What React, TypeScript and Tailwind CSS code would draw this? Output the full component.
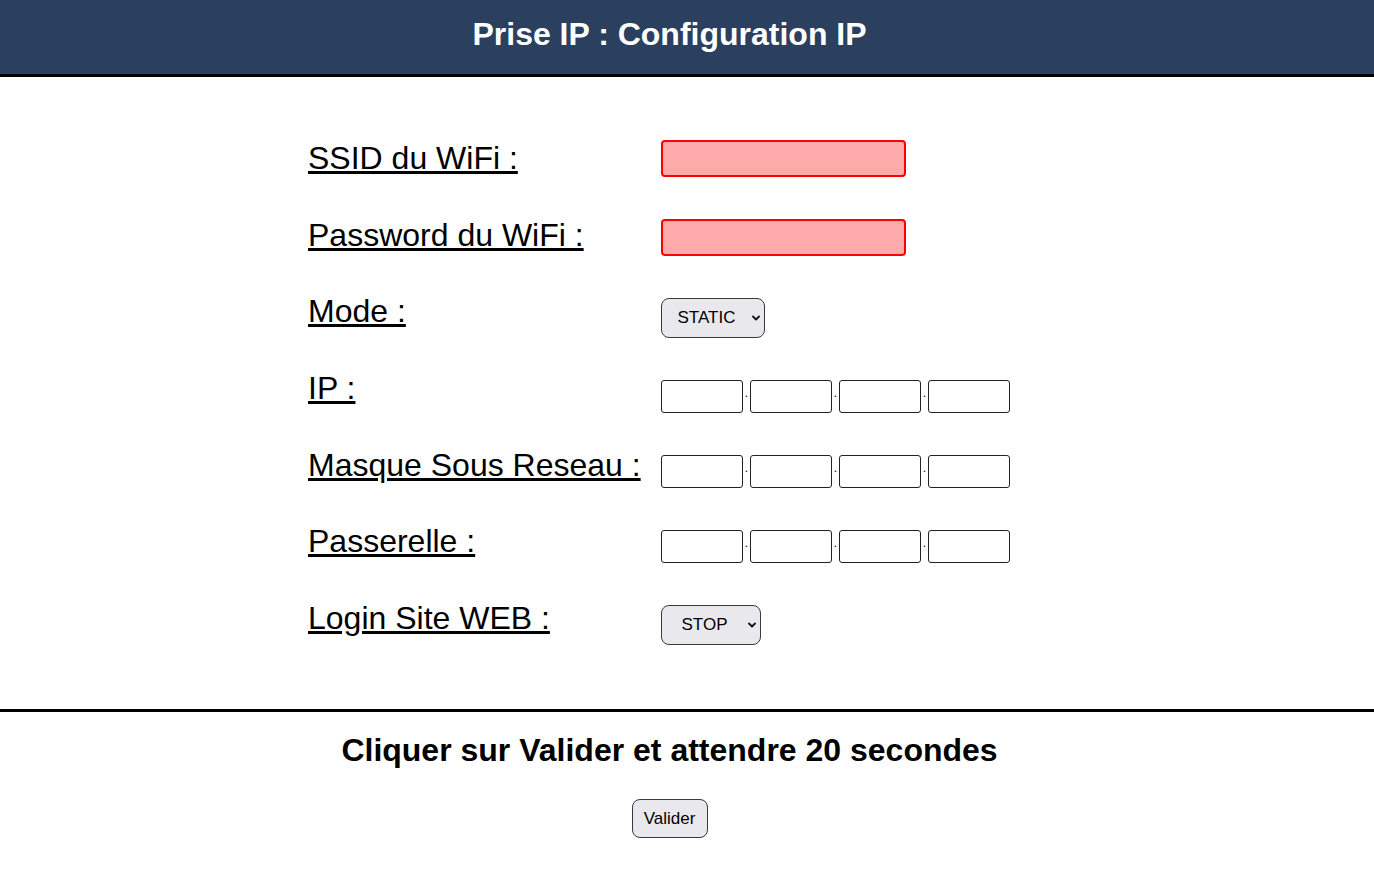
import React from 'react';

const labels = [
    'SSID du WiFi :',
    'Password du WiFi :',
    'Mode :',
    'IP :',
    'Masque Sous Reseau :',
    'Passerelle :',
    'Login Site WEB :',
];

const Chevron = () => (
    <svg width="8" height="6" viewBox="0 0 8 6" className="pointer-events-none absolute right-[5px] top-1/2 -translate-y-1/2">
        <path d="M1 1.5 L4 4.5 L7 1.5" stroke="#111" strokeWidth="1.8" fill="none" strokeLinecap="round" strokeLinejoin="round" />
    </svg>
);

const Select: React.FC<{ value: string; options: string[]; width: string }> = ({ value, options, width }) => (
    <div className={`relative h-[40px] ${width}`}>
        <select
            defaultValue={value}
            className="h-full w-full appearance-none rounded-lg border border-[#3a3a3a] bg-[#e9e9ed] pr-[13px] text-center text-[17px] text-black outline-none [text-align-last:center]"
        >
            {options.map((o) => (
                <option key={o}>{o}</option>
            ))}
        </select>
        <Chevron />
    </div>
);

const IpRow = () => (
    <div className="flex h-[33px] items-start">
        {[0, 1, 2, 3].map((i) => (
            <React.Fragment key={i}>
                {i > 0 && (
                    <span className="mt-[8px] w-[7px] text-center text-[12px] leading-[10px] text-black">.</span>
                )}
                <input type="text" className="h-[33px] w-[82px] rounded-[3px] border border-[#222] bg-white" />
            </React.Fragment>
        ))}
    </div>
);

const App: React.FC = () => {
    return (
        <div className="min-h-screen bg-white font-['Liberation_Sans',Arial,sans-serif] text-black">
            <header className="h-[77px] border-b-[3px] border-black bg-[#2b405f] pt-[16px]">
                <h1 className="pr-[35px] text-center text-[32px] font-bold leading-[37px] text-white">
                    Prise IP : Configuration IP
                </h1>
            </header>

            <div className="pr-[35px] pt-[63px]">
                <form className="mx-auto flex w-[723px]" onSubmit={(e) => e.preventDefault()}>
                    <div className="flex w-[353px] flex-col gap-[39.67px]">
                        {labels.map((l) => (
                            <label key={l} className="whitespace-nowrap text-[32px] leading-[37px] underline">
                                {l}
                            </label>
                        ))}
                    </div>
                    <div className="flex flex-col items-start gap-[42px]">
                        <input type="text" className="h-[37px] w-[245px] rounded-[4px] border-2 border-[#ff0000] bg-[#ffaaaa]" />
                        <input type="password" className="h-[37px] w-[245px] rounded-[4px] border-2 border-[#ff0000] bg-[#ffaaaa]" />
                        <Select value="STATIC" options={['STATIC', 'DHCP']} width="w-[104px]" />
                        <IpRow />
                        <IpRow />
                        <IpRow />
                        <Select value="STOP" options={['STOP', 'START']} width="w-[100px]" />
                    </div>
                </form>
            </div>

            <div className="mt-[64px] h-[3px] w-full bg-black" />

            <div className="flex flex-col items-center pr-[35px]">
                <h2 className="mt-[20px] text-[32px] font-bold leading-[37px]">
                    Cliquer sur Valider et attendre 20 secondes
                </h2>
                <button className="mt-[30px] h-[39px] w-[76px] rounded-lg border border-[#3a3a3a] bg-[#e9e9ed] text-[17px]">
                    Valider
                </button>
            </div>
        </div>
    );
};

export default App;
